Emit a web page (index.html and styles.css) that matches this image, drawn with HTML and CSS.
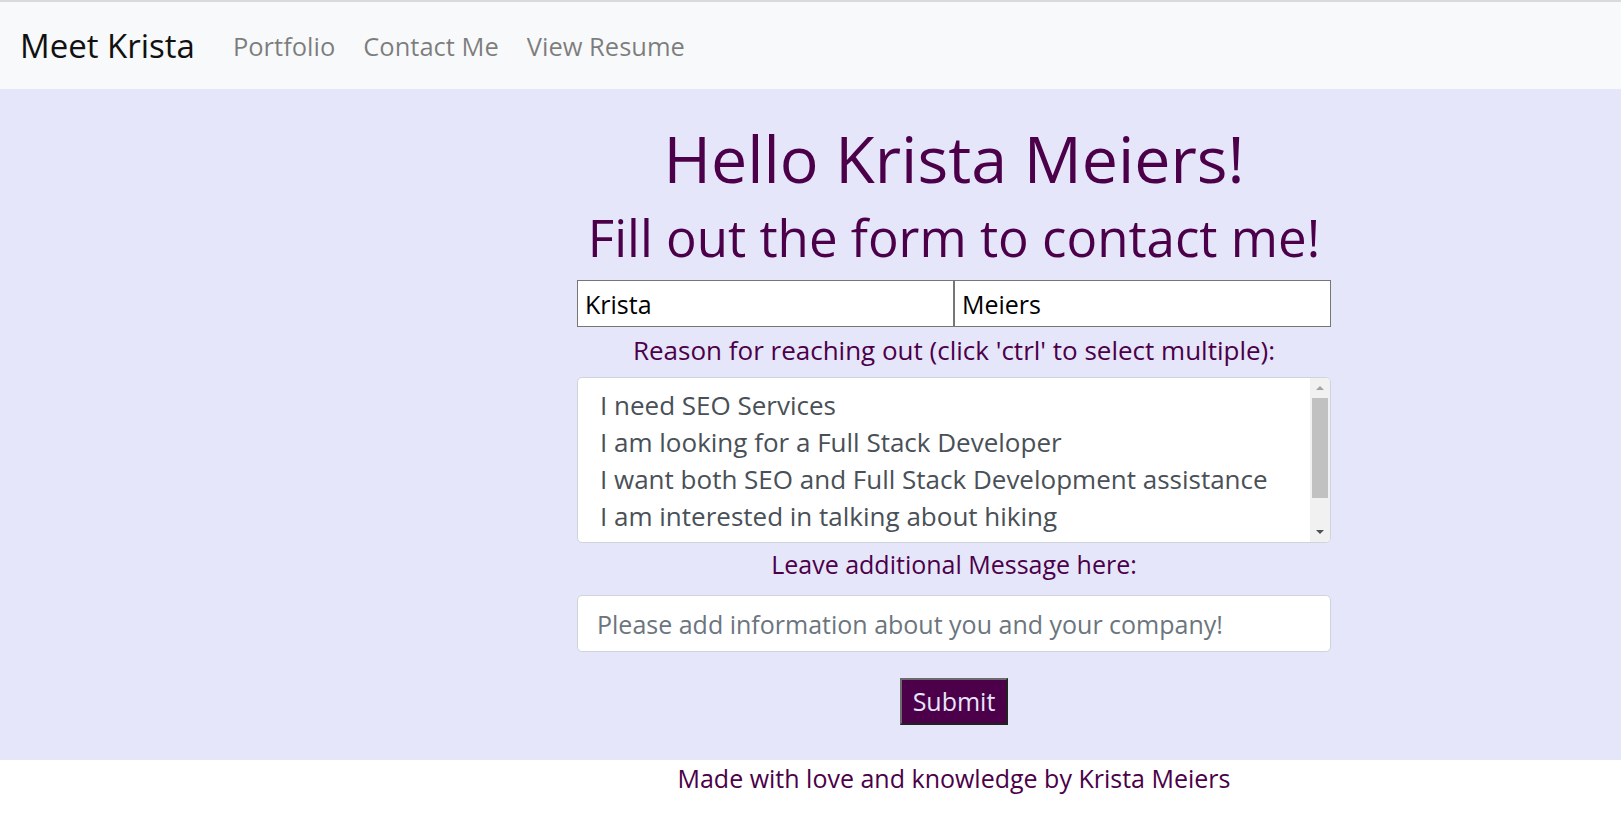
FILE: index.html
```html
<!DOCTYPE html>
<html lang="en">
<head>
<meta charset="utf-8">
<title>Contact Krista</title>
<link rel="stylesheet" href="styles.css">
</head>
<body>
<nav class="navbar">
  <a class="brand" href="#">Meet Krista</a>
  <div class="nav-links">
    <a class="nav-link" href="#">Portfolio</a>
    <a class="nav-link" href="#">Contact Me</a>
    <a class="nav-link" href="#">View Resume</a>
  </div>
</nav>
<main class="main">
  <div class="col">
    <h1 class="title">Hello Krista Meiers!</h1>
    <h2 class="subtitle">Fill out the form to contact me!</h2>
    <form class="form">
      <div class="name-row">
        <input class="name" type="text" value="Krista">
        <input class="name" type="text" value="Meiers">
      </div>
      <label class="label label-reason">Reason for reaching out (click 'ctrl' to select multiple):</label>
      <div class="select-wrap">
        <select class="reasons" multiple>
          <option>I need SEO Services</option>
          <option>I am looking for a Full Stack Developer</option>
          <option>I want both SEO and Full Stack Development assistance</option>
          <option>I am interested in talking about hiking</option>
          <option>Other</option>
        </select>
        <div class="scrollbar" aria-hidden="true">
          <div class="sb-btn"><span class="arrow-up"></span></div>
          <div class="sb-thumb"></div>
          <div class="sb-space"></div>
          <div class="sb-btn"><span class="arrow-down"></span></div>
        </div>
      </div>
      <label class="label label-msg">Leave additional Message here:</label>
      <input class="message" type="text" placeholder="Please add information about you and your company!">
      <button class="submit" type="button">Submit</button>
    </form>
  </div>
</main>
<footer class="footer">
  <p class="footer-text">Made with love and knowledge by Krista Meiers</p>
</footer>
</body>
</html>
```

FILE: styles.css
```css
* { box-sizing: border-box; }

html, body {
  margin: 0;
  padding: 0;
  background: #ffffff;
  font-family: "Open Sans", "DejaVu Sans", sans-serif;
}

.navbar {
  display: flex;
  align-items: center;
  height: 89px;
  border-top: 2px solid #dadada;
  background: #f8f9fa;
  padding-left: 20px;
}

.brand {
  font-size: 33px;
  color: #111111;
  text-decoration: none;
  line-height: 42px;
}

.nav-links {
  display: flex;
  gap: 28px;
  margin-left: 38px;
}

.nav-link {
  font-size: 25.5px;
  color: rgba(0, 0, 0, 0.5);
  text-decoration: none;
  line-height: 36px;
}

.main {
  display: grid;
  grid-template-columns: 577px 754px 1fr;
  background: #e6e6fa;
  padding: 29px 0 35px;
}

.col {
  grid-column: 2;
  display: flex;
  flex-direction: column;
  align-items: stretch;
  text-align: center;
  color: #4b0049;
}

.title {
  margin: 0;
  font-size: 64.5px;
  line-height: 80px;
  font-weight: 400;
  white-space: nowrap;
}

.subtitle {
  margin: 4px 0 0;
  font-size: 51px;
  line-height: 70px;
  font-weight: 400;
  white-space: nowrap;
}

.form {
  display: flex;
  flex-direction: column;
  align-items: stretch;
  margin-top: 8px;
}

.name-row {
  display: flex;
  height: 47px;
}

.name {
  flex: 1;
  margin: 0;
  border: 1px solid #767676;
  background: #ffffff;
  font-family: inherit;
  font-size: 25px;
  color: #000000;
  padding: 0 7px;
  outline: none;
}

.label {
  display: block;
  margin-top: 5px;
  font-size: 25px;
  line-height: 36px;
  color: #4b0049;
}

.label-reason {
  font-size: 26px;
}

.label-msg {
  margin-top: 3px;
}

.select-wrap {
  position: relative;
  display: flex;
  margin-top: 9px;
  height: 166px;
}

.reasons {
  flex: 1;
  height: 100%;
  border: 1px solid #ced4da;
  border-radius: 5px;
  background: #ffffff;
  padding: 9px 0 0 20px;
  font-family: inherit;
  font-size: 26px;
  color: #495057;
  outline: none;
  overflow: hidden;
}

.reasons option {
  padding: 0 2px 1px;
}

.scrollbar {
  position: absolute;
  top: 1px;
  right: 1px;
  bottom: 1px;
  width: 20px;
  display: flex;
  flex-direction: column;
  background: #f1f1f1;
  border-radius: 0 4px 4px 0;
}

.sb-btn {
  height: 20px;
  display: flex;
  align-items: center;
  justify-content: center;
}

.arrow-up {
  width: 0;
  height: 0;
  border-left: 4px solid transparent;
  border-right: 4px solid transparent;
  border-bottom: 4px solid #a3a3a3;
}

.arrow-down {
  width: 0;
  height: 0;
  border-left: 4px solid transparent;
  border-right: 4px solid transparent;
  border-top: 4px solid #505050;
}

.sb-thumb {
  height: 100px;
  margin: 0 2px;
  background: #c1c1c1;
}

.sb-space {
  flex: 1;
}

.message {
  margin-top: 13px;
  height: 57px;
  border: 1px solid #ced4da;
  border-radius: 5px;
  background: #ffffff;
  padding: 0 19px;
  font-family: inherit;
  font-size: 25px;
  color: #495057;
  outline: none;
}

.message::placeholder {
  color: #6c757d;
}

.submit {
  align-self: center;
  margin-top: 26px;
  width: 108px;
  height: 47px;
  background: #4b0049;
  color: #e6e6fa;
  font-family: inherit;
  font-size: 25px;
  line-height: 1;
  padding: 0;
  border-width: 2px;
  border-style: solid;
  border-color: #6b6b6b #222222 #222222 #6b6b6b;
}

.footer {
  display: grid;
  grid-template-columns: 577px 754px 1fr;
}

.footer-text {
  grid-column: 2;
  margin: 0;
  text-align: center;
  font-size: 25px;
  line-height: 36px;
  color: #4b0049;
}
```
